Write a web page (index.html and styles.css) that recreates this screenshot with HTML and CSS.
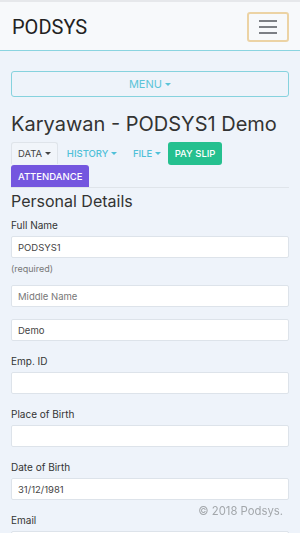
FILE: index.html
```html
<!DOCTYPE html>
<html lang="en">
<head>
    <meta charset="UTF-8">
    <meta name="viewport" content="width=device-width, initial-scale=1.0">
    <title>Karyawan - PODSYS1 Demo</title>
    <link rel="stylesheet" href="styles.css">
</head>
<body>
    <nav class="navbar">
        <span class="brand">PODSYS</span>
        <button class="toggler" type="button">
            <span class="bar"></span>
            <span class="bar"></span>
            <span class="bar"></span>
        </button>
    </nav>

    <div class="container">
        <button class="menu-btn" type="button">MENU <span class="caret"></span></button>

        <h1>Karyawan - PODSYS1 Demo</h1>

        <div class="tabs">
            <span class="tab active">DATA <span class="caret"></span></span>
            <span class="tab link">HISTORY <span class="caret"></span></span>
            <span class="tab link">FILE <span class="caret"></span></span>
            <span class="tab green">PAY SLIP</span>
            <span class="tab purple">ATTENDANCE</span>
        </div>

        <h2>Personal Details</h2>

        <form class="form">
            <div class="group">
                <label for="full_name">Full Name</label>
                <input type="text" id="full_name" value="PODSYS1">
                <small class="help">(required)</small>
            </div>
            <div class="group">
                <input type="text" placeholder="Middle Name">
            </div>
            <div class="group">
                <input type="text" value="Demo">
            </div>
            <div class="group">
                <label for="emp_id">Emp. ID</label>
                <input type="text" id="emp_id">
            </div>
            <div class="group">
                <label for="place_birth">Place of Birth</label>
                <input type="text" id="place_birth">
            </div>
            <div class="group">
                <label for="date_birth">Date of Birth</label>
                <input type="text" id="date_birth" value="31/12/1981">
            </div>
            <div class="group">
                <label for="email">Email</label>
                <input type="text" id="email">
            </div>
        </form>
    </div>

    <footer class="footer">&copy; 2018 Podsys.</footer>
</body>
</html>
```

FILE: styles.css
```css
body {
    margin: 0;
    font-family: Inter, "Open Sans", sans-serif;
    background: #eef3fa;
    color: #333;
}
.navbar {
    height: 48px;
    display: flex;
    align-items: center;
    justify-content: space-between;
    padding: 0 11px 0 12px;
    background: #f7f9fb;
    border-top: 2px solid #e6e8eb;
    border-bottom: 1px solid #8ad4e0;
}
.brand {
    font-family: Roboto, "Liberation Sans", sans-serif;
    font-size: 20px;
    color: #222;
    margin-top: 1px;
}
.toggler {
    width: 42px;
    height: 30px;
    margin-top: 2px;
    border: 2px solid #ecd3a4;
    border-radius: 3px;
    background: transparent;
    display: flex;
    flex-direction: column;
    align-items: center;
    justify-content: center;
    gap: 4px;
    padding: 0;
}
.toggler .bar {
    display: block;
    width: 18px;
    height: 2px;
    background: #7c7f84;
}
.container {
    padding: 0 11px;
}
.menu-btn {
    display: block;
    width: 100%;
    height: 26px;
    margin-top: 20px;
    border: 1px solid #86d2de;
    border-radius: 3px;
    background: transparent;
    color: #5cc4d8;
    font-family: inherit;
    font-size: 11px;
}
.caret {
    display: inline-block;
    width: 0;
    height: 0;
    vertical-align: 2px;
    border-left: 3px solid transparent;
    border-right: 3px solid transparent;
    border-top: 3px solid currentColor;
}
h1 {
    margin: 15px 0 0;
    font-size: 20px;
    font-weight: 400;
    line-height: 24px;
    color: #333;
}
.tabs {
    display: flex;
    flex-wrap: wrap;
    margin-top: 6px;
    border-bottom: 1px solid #dfe4ea;
}
.tab {
    height: 21px;
    line-height: 21px;
    padding: 0 6px;
    font-size: 9.5px;
    font-weight: 500;
    border-radius: 3px 3px 0 0;
    border: 1px solid transparent;
    border-bottom: none;
    margin-right: 2px;
}
.tab.active {
    color: #444;
    border-color: #dfe4ea;
    background: #f1f5fa;
    font-weight: 400;
}
.tab.link {
    color: #4fc0d8;
}
.tab.link + .tab.link {
    margin-right: 0;
}
.tab.green {
    background: #25c08f;
    color: #fff;
    border-radius: 3px;
    height: 22px;
}
.tab.purple {
    background: #7456df;
    color: #fff;
    height: 21px;
    line-height: 22px;
}
h2 {
    margin: 2px 0 0;
    font-size: 16px;
    font-weight: 400;
    line-height: 22px;
    color: #333;
}
.form {
    margin-top: 5px;
}
.group {
    margin-bottom: 12px;
}
label {
    display: block;
    font-size: 10px;
    line-height: 16px;
    margin-bottom: 3px;
    color: #333;
}
input[type="text"] {
    display: block;
    box-sizing: border-box;
    width: 100%;
    height: 22px;
    padding: 0 6px;
    border: 1px solid #dde3ea;
    border-radius: 2px;
    background: #fff;
    font-family: inherit;
    font-size: 9.5px;
    color: #444;
}
input::placeholder {
    color: #777;
}
.help {
    display: block;
    margin-top: 4px;
    font-size: 9px;
    line-height: 14px;
    color: #777;
    margin-bottom: -3px;
}
.footer {
    position: fixed;
    right: 17px;
    bottom: 15px;
    font-size: 11.3px;
    color: #a3a7ab;
}
```
